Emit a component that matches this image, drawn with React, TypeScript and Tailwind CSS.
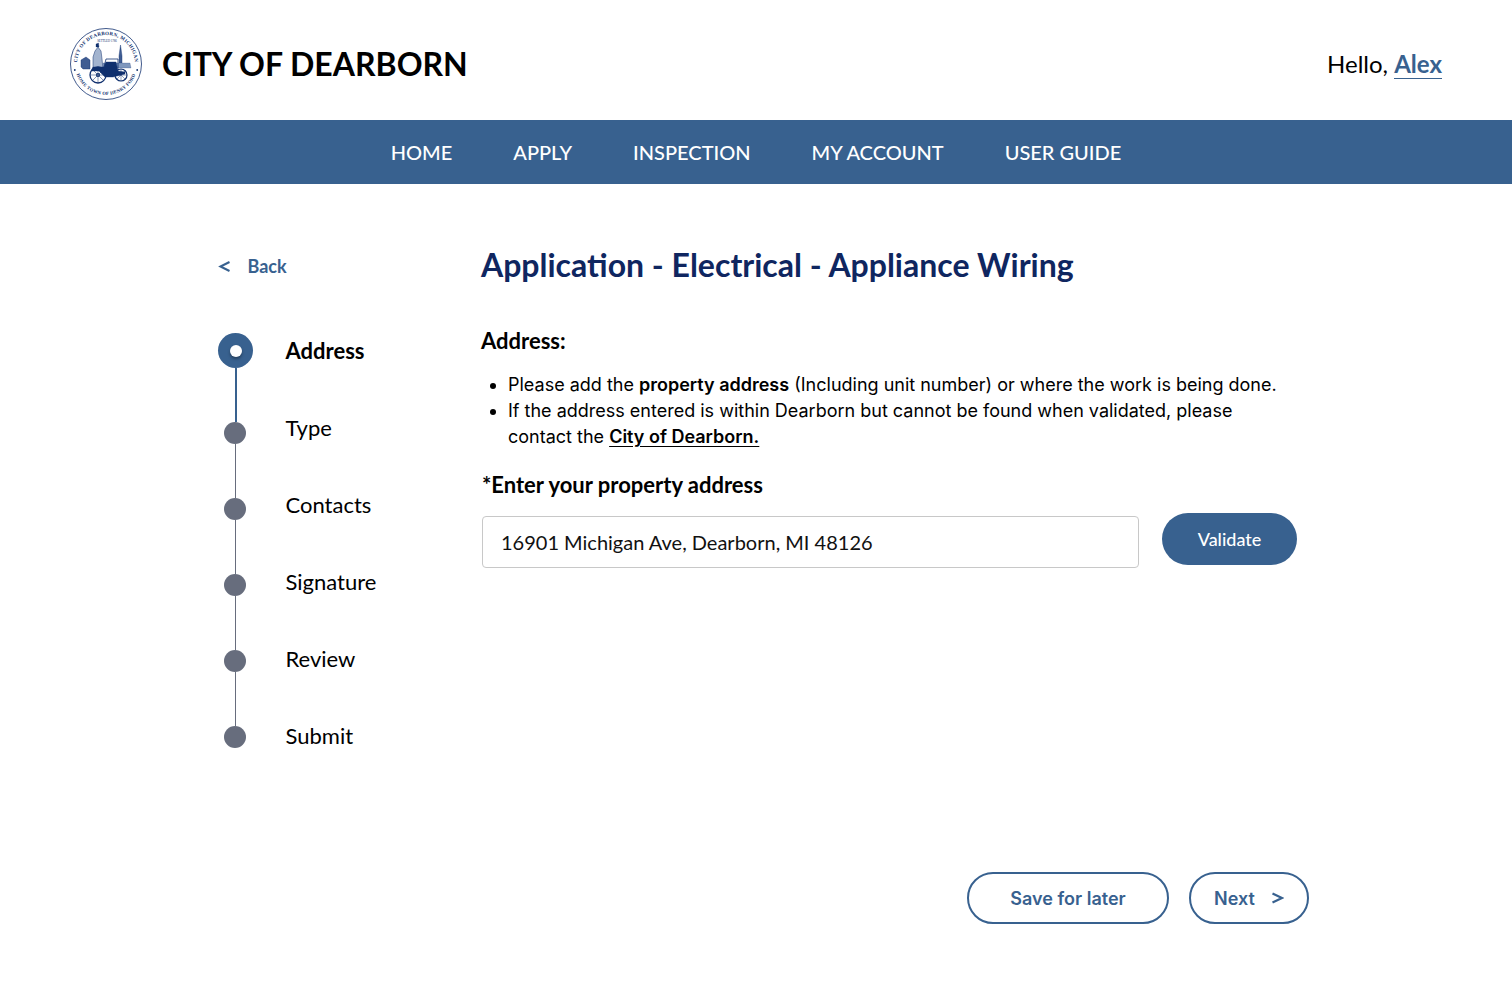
import React from "react";

const lato = "font-['Lato',sans-serif]";
const inter = "font-['Inter',sans-serif]";

function Seal() {
  return (
    <svg width="74" height="74" viewBox="0 0 74 74" className="shrink-0">
      <defs>
        <path id="sealTop" d="M 9 44.5 A 29 29 0 1 1 65 44.5" />
        <path id="sealBottom" d="M 6 42 A 31.5 31.5 0 0 0 68 42" />
      </defs>
      <circle cx="37" cy="37" r="35.5" fill="none" stroke="#10306e" strokeWidth="0.8" />
      <circle cx="5.8" cy="43" r="0.9" fill="#10306e" />
      <circle cx="68.2" cy="43" r="0.9" fill="#10306e" />
      <text fontFamily="Liberation Serif, serif" fontSize="5" fontWeight="700" fill="#10306e" letterSpacing="0.3">
        <textPath href="#sealTop" startOffset="50%" textAnchor="middle">CITY OF DEARBORN, MICHIGAN</textPath>
      </text>
      <text fontFamily="Liberation Serif, serif" fontSize="4.6" fontWeight="700" fill="#10306e" letterSpacing="0.3">
        <textPath href="#sealBottom" startOffset="50%" textAnchor="middle">HOME TOWN OF HENRY FORD</textPath>
      </text>
      <text x="38" y="14.5" textAnchor="middle" fontFamily="Liberation Serif, serif" fontSize="3" fill="#10306e">SETTLED 1786</text>
      <g fill="#10306e" stroke="#10306e">
        <path d="M12 40 L12 33 L17 30 L21 33 L21 42 L14 42 Z" fill="#3f5c92" strokeWidth="0.4" />
        <path d="M24 42 L24 30 L26 24 L29 20 L32 24 L33 32 L34 42 Z" fill="#a3b4cf" strokeWidth="0.5" />
        <path d="M27 20 L27 17 L29.5 16 L30 20 Z" strokeWidth="0.3" />
        <path d="M50 40 L50 29 L51.5 18 L53 29 L53 40 Z" fill="#3f5c92" strokeWidth="0.4" />
        <path d="M34 36 L61 36 L62 41 L34 41 Z" fill="#7f97bd" strokeWidth="0.2" />
        <path d="M22 44 L24 40 L35 40 L37 35 L47 35 L49 44 L56 45 L56 47 L44 50 L36 50 L30 44 Z" strokeWidth="0.4" />
        <path d="M35 40 L37 32 L49 32 L49 43" fill="none" strokeWidth="0.8" />
      </g>
      <g fill="none" stroke="#10306e">
        <circle cx="29" cy="48" r="8" strokeWidth="1.3" />
        <circle cx="29" cy="48" r="1.5" strokeWidth="1.1" />
        <path d="M29 40V56M21 48H37M23.3 42.3L34.7 53.7M34.7 42.3L23.3 53.7" strokeWidth="0.5" />
        <circle cx="52" cy="48" r="6" strokeWidth="1.2" />
        <path d="M52 42V54M46 48H58M47.8 43.8L56.2 52.2M56.2 43.8L47.8 52.2" strokeWidth="0.45" />
      </g>
    </svg>
  );
}

function ChevronLeft() {
  return (
    <svg viewBox="0 0 12 13" className="w-[12px] h-[13px] mr-[17.5px]" fill="none" stroke="currentColor" strokeWidth="2.1">
      <path d="M11.5 2 L2.5 6.5 L11.5 11" />
    </svg>
  );
}

function ChevronRight() {
  return (
    <svg viewBox="0 0 12 12" className="w-[12px] h-[12px]" fill="none" stroke="currentColor" strokeWidth="2.2">
      <path d="M0.5 1.5 L10 6 L0.5 10.5" />
    </svg>
  );
}

const navItems = ["HOME", "APPLY", "INSPECTION", "MY ACCOUNT", "USER GUIDE"];
const steps = ["Address", "Type", "Contacts", "Signature", "Review", "Submit"];

function Dot() {
  return <div className="w-[22px] h-[22px] mr-px rounded-full bg-[#676d7d]" />;
}

function Stepper() {
  return (
    <div className="flex">
      <div className="flex flex-col items-center w-[35px] mt-[1px]">
        <div className="w-[35px] h-[35px] rounded-full bg-[#38618f] flex items-center justify-center">
          <div className="w-[12px] h-[12px] rounded-full bg-white shadow-[0_2px_3px_rgba(0,0,0,0.35)]" />
        </div>
        <div className="w-[2px] h-[54px] bg-[#38618f]" />
        <Dot />
        <div className="w-px h-[54px] bg-[#676d7d]" />
        <Dot />
        <div className="w-px h-[54px] bg-[#676d7d]" />
        <Dot />
        <div className="w-px h-[54px] bg-[#676d7d]" />
        <Dot />
        <div className="w-px h-[54px] bg-[#676d7d]" />
        <Dot />
      </div>
      <ul className={`${lato} ml-[32.5px] mt-px flex flex-col text-[22px] text-black`}>
        {steps.map((s, i) => (
          <li key={s} className={`h-[77px] leading-[36px] ${i === 0 ? "font-bold" : ""}`}>{s}</li>
        ))}
      </ul>
    </div>
  );
}

export default function App() {
  return (
    <div className="w-[1512px] h-[982px] bg-white overflow-hidden relative">
      <header className="h-[120px] pl-[69px] pr-[70px] pt-[8px] flex items-center justify-between">
        <div className="flex items-center gap-[19px]">
          <Seal />
          <span className={`${lato} font-bold text-[32px] text-black`}>CITY OF DEARBORN</span>
        </div>
        <div className={`${lato} text-[24px] text-black`}>
          Hello, <a className="text-[#38618f] font-bold border-b border-[#38618f]">Alex</a>
        </div>
      </header>
      <nav className={`${lato} h-[64px] bg-[#38618f] flex items-center justify-center gap-[61px] text-[20px] text-white font-medium`}>
        {navItems.map((n) => (
          <span key={n}>{n}</span>
        ))}
      </nav>
      <main className="flex pl-[218px] pt-[60px]">
        <aside className="w-[263px] shrink-0">
          <div className={`${lato} h-[45px] flex items-center font-bold text-[#38618f] text-[18px]`}>
            <ChevronLeft />
            <span>Back</span>
          </div>
          <div className="mt-[43px]">
            <Stepper />
          </div>
        </aside>
        <section className="w-[830px]">
          <h1 className={`${lato} h-[42px] leading-[42px] font-bold text-[32px] text-[#0f2660]`}>
            Application - Electrical - Appliance Wiring
          </h1>
          <h2 className={`${lato} mt-[40px] font-bold text-[22px] leading-[30px] text-black`}>Address:</h2>
          <ul className={`${inter} mt-[16px] ml-[27px] list-disc text-[18px] leading-[26px] text-black w-[790px]`}>
            <li>
              Please add the <b className="font-semibold">property address</b> (Including unit number) or where the work is being done.
            </li>
            <li>
              If the address entered is within Dearborn but cannot be found when validated, please contact the{" "}
              <a className="font-semibold underline underline-offset-[3px]">City of Dearborn.</a>
            </li>
          </ul>
          <label className={`${lato} block mt-[20px] ml-px font-bold text-[22px] leading-[30px] text-black`}>
            *Enter your property address
          </label>
          <div className="flex items-start mt-[13px]">
            <div className="ml-px mt-[3px] w-[657px] h-[52px] rounded-[4px] border border-[#c8c8c8] flex items-center pl-[18px]">
              <span className={`${lato} text-[20px] text-[#111]`}>16901 Michigan Ave, Dearborn, MI 48126</span>
            </div>
            <button className={`${lato} ml-[23px] w-[135px] h-[52px] rounded-full bg-[#38618f] text-white text-[18px] font-medium`}>
              Validate
            </button>
          </div>
        </section>
      </main>
      <div className={`${inter} absolute left-[967px] top-[872px] flex gap-[20px] text-[18px] font-semibold text-[#38618f]`}>
        <button className="w-[202px] h-[52px] rounded-full border-2 border-[#38618f]">Save for later</button>
        <button className="w-[120px] h-[52px] rounded-full border-2 border-[#38618f] flex items-center justify-center gap-[17px]">
          Next
          <ChevronRight />
        </button>
      </div>
    </div>
  );
}
